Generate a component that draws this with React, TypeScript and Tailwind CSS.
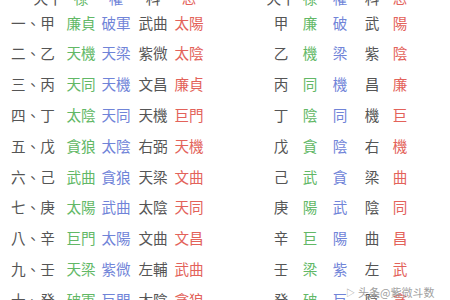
import React from "react";

const G = "text-[#62b866]";
const B = "text-[#7084d8]";
const K = "text-[#555555]";
const R = "text-[#e3625a]";

const rows: [string, string, string, string, string][] = [
  ["一、甲", "廉貞", "破軍", "武曲", "太陽"],
  ["二、乙", "天機", "天梁", "紫微", "太陰"],
  ["三、丙", "天同", "天機", "文昌", "廉貞"],
  ["四、丁", "太陰", "天同", "天機", "巨門"],
  ["五、戊", "貪狼", "太陰", "右弼", "天機"],
  ["六、己", "武曲", "貪狼", "天梁", "文曲"],
  ["七、庚", "太陽", "武曲", "太陰", "天同"],
  ["八、辛", "巨門", "太陽", "文曲", "文昌"],
  ["九、壬", "天梁", "紫微", "左輔", "武曲"],
  ["十、癸", "破軍", "巨門", "太陰", "貪狼"],
];

const right: [string, string, string, string, string][] = [
  ["甲", "廉", "破", "武", "陽"],
  ["乙", "機", "梁", "紫", "陰"],
  ["丙", "同", "機", "昌", "廉"],
  ["丁", "陰", "同", "機", "巨"],
  ["戊", "貪", "陰", "右", "機"],
  ["己", "武", "貪", "梁", "曲"],
  ["庚", "陽", "武", "陰", "同"],
  ["辛", "巨", "陽", "曲", "昌"],
  ["壬", "梁", "紫", "左", "武"],
  ["癸", "破", "巨", "陰", "貪"],
];

const leftW = ["w-[66px]", "w-[30px]", "w-[40px]", "w-[34px]", "w-[38px]"];
const rightW = ["w-[34px]", "w-[24px]", "w-[36px]", "w-[28px]", "w-[28px]"];
const colors = [K, G, B, K, R];

function Row({ cells, widths, h }: { cells: string[]; widths: string[]; h: string }) {
  return (
    <div className={`flex items-center ${h}`}>
      {cells.map((c, i) => (
        <div key={i} className={`${widths[i]} shrink-0 flex justify-center whitespace-nowrap ${colors[i]}`}>
          {c}
        </div>
      ))}
    </div>
  );
}

export default function App() {
  return (
    <div
      className="relative w-[450px] h-[300px] overflow-hidden bg-white text-[14.6px] leading-none"
      style={{ fontFamily: '"Noto Sans CJK TC", "Noto Sans CJK SC", sans-serif' }}
    >
      <div className="flex mt-[-11.6px]">
        <div className="flex flex-col">
          <div className="flex items-center h-[19.2px]">
            <div className={`w-[66px] shrink-0 flex justify-center pl-[30px] ${K}`}>天干</div>
            <div className={`w-[30px] shrink-0 flex justify-center ${G}`}>祿</div>
            <div className={`w-[40px] shrink-0 flex justify-center ${B}`}>權</div>
            <div className={`w-[34px] shrink-0 flex justify-center ${K}`}>科</div>
            <div className={`w-[38px] shrink-0 flex justify-center ${R}`}>忌</div>
          </div>
          {rows.map((r, i) => (
            <Row key={i} cells={r} widths={leftW} h="h-[30.8px]" />
          ))}
        </div>
        <div className="w-[56px] shrink-0" />
        <div className="flex flex-col">
          <Row cells={["天干", "祿", "權", "科", "忌"]} widths={rightW} h="h-[19.2px]" />
          {right.map((r, i) => (
            <Row key={i} cells={r} widths={rightW} h="h-[30.8px]" />
          ))}
        </div>
      </div>
      <div className="absolute left-[346px] top-[287px] flex items-center gap-[3px] text-[11px] text-[#a0a0a0] whitespace-nowrap">
        <span className="text-[9px]">▷</span>
        <span>头条@紫微斗数</span>
      </div>
    </div>
  );
}
